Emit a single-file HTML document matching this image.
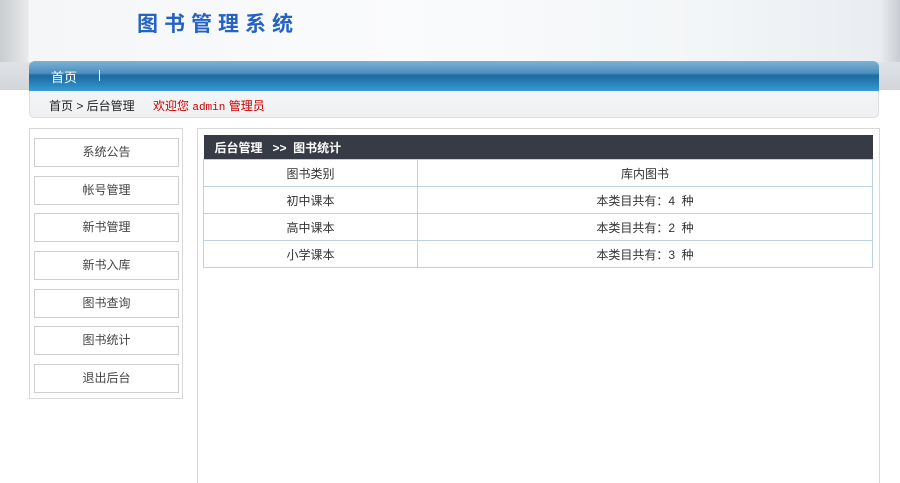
<!DOCTYPE html><html style="overflow:hidden;height:483px"><head><meta charset="utf-8"><style>
body{margin:0;width:900px;height:483px;overflow:hidden;background:#fff;font-family:"Liberation Sans","Noto Sans CJK SC",sans-serif;font-size:12px;color:#333;position:relative}
.hdr{position:absolute;left:0;top:0;width:900px;height:90px;background:linear-gradient(90deg,#c9ccd0 0,#e8eaec 28px,#f4f6f8 29px,#fafbfc 400px,#f3f6f8 700px,#e9edf1 880px,#c9cdd3 900px)}
.hdr:after{content:"";position:absolute;left:0;top:62px;width:900px;height:28px;background:linear-gradient(#e0e3e6,#d2d6da)}
.title{position:absolute;left:137px;top:8px;font-size:21px;font-weight:bold;color:#2463c4;letter-spacing:6px;font-family:"Noto Sans CJK SC",sans-serif}
.nav{position:absolute;left:29px;top:61px;width:850px;height:30px;border-radius:6px 6px 0 0;background:linear-gradient(#7fb1d3 0,#4c8fbe 40%,#1c6aa0 48%,#2a87c0 80%,#3a9dd3 100%);z-index:2}
.nav span{position:absolute;left:22px;top:6px;color:#fff;font-size:13px}
.nav i{position:absolute;left:70px;top:9px;width:1px;height:11px;background:#fff}
.bc{position:absolute;left:29px;top:91px;width:848px;height:26px;border:1px solid #dcdfe2;border-top:0;border-radius:0 0 5px 5px;background:linear-gradient(#f4f5f6,#eef0f2);z-index:2}
.bc span{position:absolute;top:6px}
.lp{position:absolute;left:29px;top:128px;width:152px;height:269px;border:1px solid #d8d8d8}
.btn{position:absolute;left:4px;width:143px;height:27px;border:1px solid #cfcfcf;text-align:center;line-height:27px;color:#444}
.mp{position:absolute;left:197px;top:128px;width:681px;height:355px;border:1px solid #d8d8d8;border-bottom:0}
table{position:absolute;left:5px;top:6px;width:670px;border-collapse:collapse}
th{background:#363b45;color:#fff;text-align:left;height:24px;padding:0 0 0 11px;font-size:12px}
td{border:1px solid #bcd3de;height:26px;text-align:center;padding:0}
</style></head><body>
<div class="hdr"></div>
<div class="title">图书管理系统</div>
<div class="nav"><span>首页</span><i></i></div>
<div class="bc"><span style="left:19px;color:#222">首页 &gt; 后台管理</span><span style="left:123px;color:#c00">欢迎您 <span style="position:static;font-family:'Liberation Mono',monospace;font-size:11px">admin</span> 管理员</span></div>
<div class="lp">
<div class="btn" style="top:9px">系统公告</div>
<div class="btn" style="top:47px">帐号管理</div>
<div class="btn" style="top:84px">新书管理</div>
<div class="btn" style="top:122px">新书入库</div>
<div class="btn" style="top:160px">图书查询</div>
<div class="btn" style="top:197px">图书统计</div>
<div class="btn" style="top:235px">退出后台</div>
</div>
<div class="mp"><table>
<tr><th colspan="2">后台管理 &nbsp;&nbsp;&gt;&gt;&nbsp; 图书统计</th></tr>
<tr><td style="width:213px">图书类别</td><td>库内图书</td></tr>
<tr><td>初中课本</td><td>本类目共有：4 &nbsp;种</td></tr>
<tr><td>高中课本</td><td>本类目共有：2 &nbsp;种</td></tr>
<tr><td>小学课本</td><td>本类目共有：3 &nbsp;种</td></tr>
</table></div>
</body></html>
